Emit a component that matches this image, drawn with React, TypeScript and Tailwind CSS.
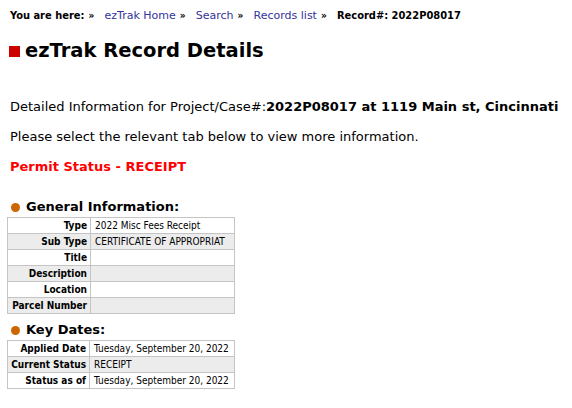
const general = [
  { label: 'Type', value: '2022 Misc Fees Receipt' },
  { label: 'Sub Type', value: 'CERTIFICATE OF APPROPRIAT' },
  { label: 'Title', value: '' },
  { label: 'Description', value: '' },
  { label: 'Location', value: '' },
  { label: 'Parcel Number', value: '' },
]

const dates = [
  { label: 'Applied Date', value: 'Tuesday, September 20, 2022' },
  { label: 'Current Status', value: 'RECEIPT' },
  { label: 'Status as of', value: 'Tuesday, September 20, 2022' },
]

function Crumb({ children }: { children: React.ReactNode }) {
  return <a className="font-['DejaVu_Sans',sans-serif] font-normal text-[#333399] no-underline">{children}</a>
}

function Sep() {
  return <span className="inline-block w-[20px] pl-[4px] text-[10px] text-black">»</span>
}

function SectionHead({ title }: { title: string }) {
  return (
    <div className="flex h-[20px] items-center gap-[6px] pl-[11px]">
      <span className="h-[9px] w-[9px] rounded-full bg-[#cc6600]" />
      <span className="text-[13px] font-bold text-black">{title}</span>
    </div>
  )
}

function InfoTable({ rows, labelW }: { rows: { label: string; value: string }[]; labelW: string }) {
  return (
    <table className="ml-[7px] w-[228px] table-fixed border-collapse border border-[#c4c4c4] font-['DejaVu_Sans_Condensed',sans-serif] text-[10px]">
      <colgroup>
        <col className={labelW} />
        <col />
      </colgroup>
      <tbody>
        {rows.map((row, i) => (
          <tr key={row.label} className={i % 2 === 1 ? 'bg-[#ececec]' : 'bg-white'}>
            <td className="h-[16px] overflow-hidden whitespace-nowrap border border-[#c4c4c4] pl-[2px] pr-[3px] py-0 text-right font-bold leading-[15px] text-black">
              {row.label}
            </td>
            <td className="h-[16px] overflow-hidden whitespace-nowrap border border-[#c4c4c4] px-[4px] py-0 leading-[15px] text-black">
              {row.value}
            </td>
          </tr>
        ))}
      </tbody>
    </table>
  )
}

export default function App() {
  return (
    <div className="min-h-[408px] w-[572px] bg-white font-['DejaVu_Sans',Verdana,sans-serif] text-black">
      <div className="whitespace-nowrap pl-[10px] pt-[9px] font-['DejaVu_Sans_Condensed',sans-serif] text-[11px] font-bold leading-[14px]">
        <span>You are here:</span>
        <Sep />
        <Crumb>ezTrak Home</Crumb>
        <Sep />
        <Crumb>Search</Crumb>
        <Sep />
        <Crumb>Records list</Crumb>
        <Sep />
        <span>Record#: 2022P08017</span>
      </div>

      <div className="mt-[17px] flex h-[22px] items-center gap-[5px] pl-[9px]">
        <span className="h-[11px] w-[11px] bg-[#cc0000]" />
        <h1 className="text-[19.5px] font-bold leading-[22px]">ezTrak Record Details</h1>
      </div>

      <p className="mt-[37px] whitespace-nowrap pl-[10px] text-[13px] leading-[16px]">
        Detailed Information for Project/Case#:
        <b>2022P08017 at 1119 Main st, Cincinnati</b>
      </p>
      <p className="mt-[14px] pl-[10px] text-[13px] leading-[16px]">
        Please select the relevant tab below to view more information.
      </p>
      <p className="mt-[14px] pl-[10px] text-[13px] font-bold leading-[16px] text-[#ff0000]">
        Permit Status - RECEIPT
      </p>

      <div className="mt-[22px]">
        <SectionHead title="General Information:" />
        <InfoTable rows={general} labelW="w-[83px]" />
      </div>

      <div className="mt-[6px]">
        <SectionHead title="Key Dates:" />
        <InfoTable rows={dates} labelW="w-[82px]" />
      </div>
    </div>
  )
}
